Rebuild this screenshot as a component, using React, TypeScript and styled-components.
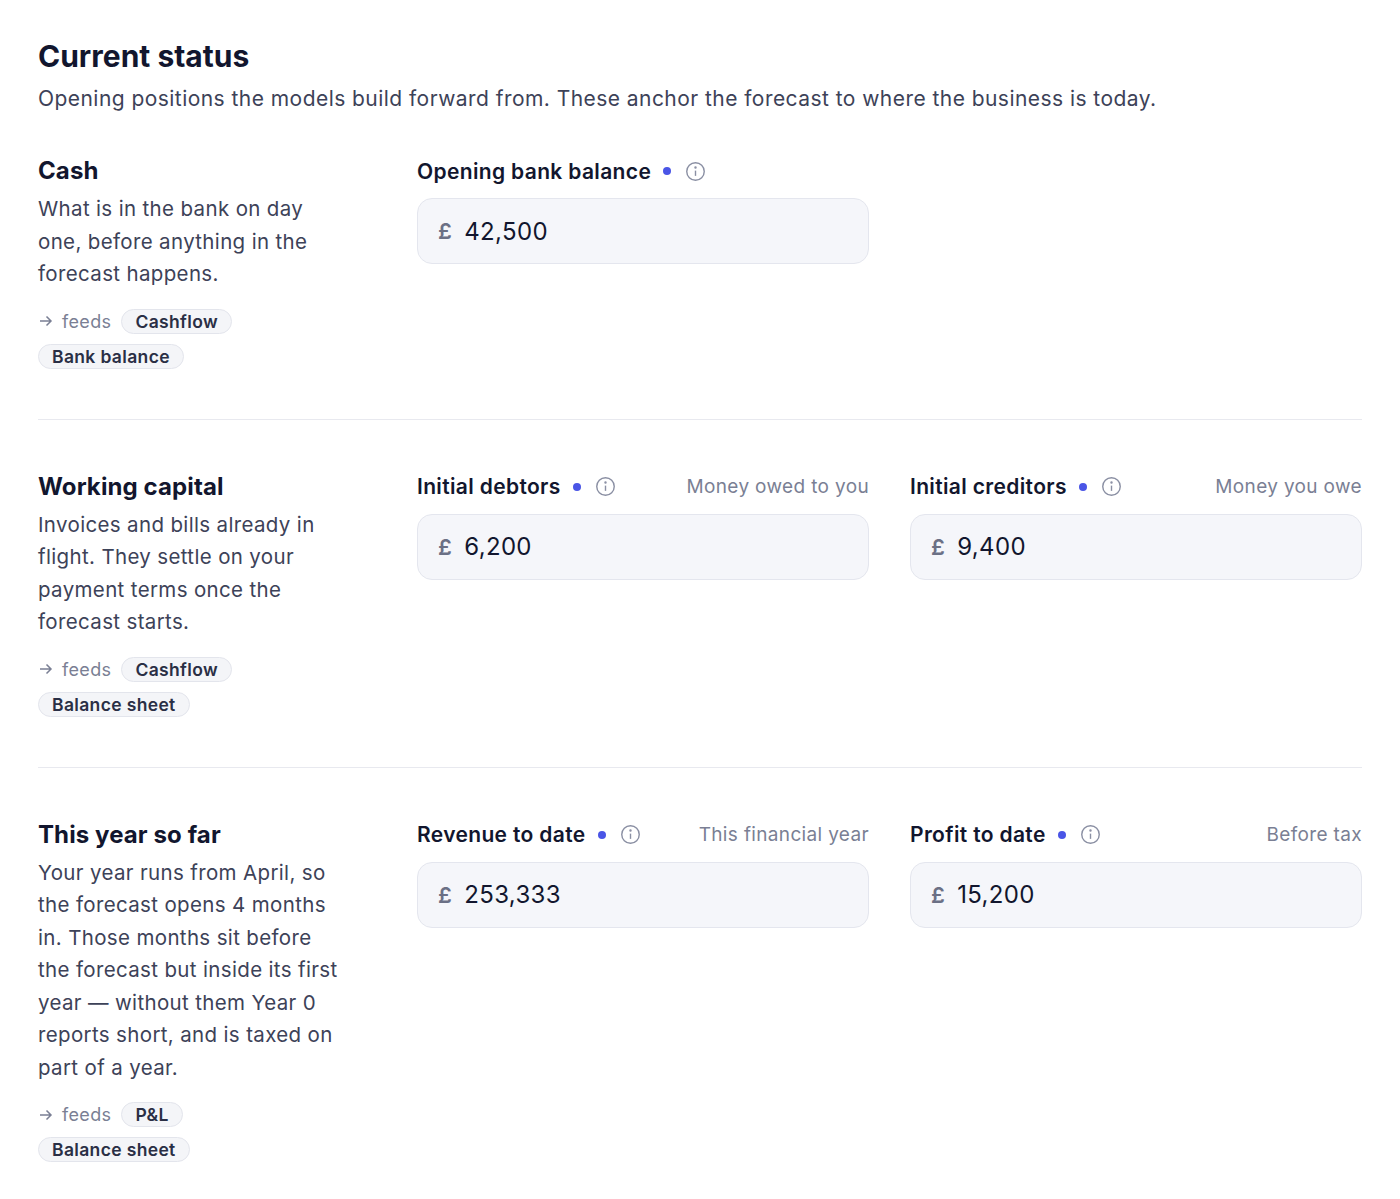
import React from "react";
import styled, { createGlobalStyle } from "styled-components";

const G = createGlobalStyle`
  body { margin: 0; background: #fff; font-family: Inter, "Noto Sans", sans-serif; color: #161b33; letter-spacing: 0.35px; }
`;
const Page = styled.div`padding: 38px 38px 20px 38px; width: 1324px;`;
const Title = styled.h1`margin: 0; font-size: 30px; font-weight: 700; letter-spacing: 0; color: #12162e;`;
const Sub = styled.p`margin: 10px 0 0; font-size: 21px; color: #3d4258; line-height: 30px; letter-spacing: 0.45px;`;
const Section = styled.section<{ last?: boolean }>`
  display: grid; grid-template-columns: 338px 452px 452px; column-gap: 41px;
  padding: ${p => (p.last ? "52px 0 0" : "52px 0 50px")};
  border-bottom: ${p => (p.last ? "none" : "1px solid #e8e9ef")};
  &:first-of-type { padding-top: 42px; }
`;
const SecTitle = styled.h2`margin: 0 0 7px; font-size: 24px; font-weight: 700; color: #12162e; line-height: 30px; letter-spacing: 0.1px;`;
const Desc = styled.p`margin: 0; font-size: 20.5px; line-height: 32.5px; color: #3d4258; max-width: 300px;`;
const Feeds = styled.div`display: flex; flex-wrap: wrap; gap: 10px 10px; margin-top: 18px; align-items: center; width: 250px;`;
const FeedLbl = styled.span`font-size: 18px; color: #7a7f94; display: flex; align-items: center; gap: 8px;`;
const Chip = styled.span`font-size: 17.5px; font-weight: 600; color: #2a2f45; background: #f4f5f8; border: 1px solid #e3e5ec; border-radius: 14px; padding: 1px 13px;`;
const Field = styled.div`display: flex; flex-direction: column;`;
const LabelRow = styled.div`display: flex; align-items: center; height: 30px; margin-bottom: 12px;`;
const Label = styled.span`font-size: 21px; font-weight: 600; color: #12162e;`;
const Dot = styled.span`width: 8px; height: 8px; border-radius: 50%; background: #4a55e6; margin-left: 12px;`;
const Hint = styled.span`margin-left: auto; font-size: 19px; color: #7a7f94;`;
const Input = styled.div`height: 64px; border: 1px solid #e4e6ee; background: #f5f6fa; border-radius: 15px; display: flex; align-items: center; padding: 0 20px; font-size: 24px; color: #12162e;`;
const Pound = styled.span`color: #6b7085; font-weight: 600; margin-right: 12px; font-size: 22px;`;

const Info = () => (
  <svg width="21" height="21" viewBox="0 0 24 24" fill="none" stroke="#8a8fa3" strokeWidth="1.6" style={{ marginLeft: 14 }}>
    <circle cx="12" cy="12" r="10" /><line x1="12" y1="11" x2="12" y2="17" /><circle cx="12" cy="7.5" r="0.6" fill="#8a8fa3" />
  </svg>
);
const Arrow = () => (
  <svg width="16" height="14" viewBox="0 0 16 14" fill="none" stroke="#7a7f94" strokeWidth="1.5"><path d="M2 7h11M8.5 2.5 13 7l-4.5 4.5" /></svg>
);

const F = ({ label, hint, value }: { label: string; hint?: string; value: string }) => (
  <Field>
    <LabelRow><Label>{label}</Label><Dot /><Info />{hint && <Hint>{hint}</Hint>}</LabelRow>
    <Input><Pound>£</Pound>{value}</Input>
  </Field>
);

const Left = ({ t, d, chips }: { t: string; d: string; chips: string[] }) => (
  <div>
    <SecTitle>{t}</SecTitle>
    <Desc>{d}</Desc>
    <Feeds><FeedLbl><Arrow />feeds</FeedLbl>{chips.map(c => <Chip key={c}>{c}</Chip>)}</Feeds>
  </div>
);

export default function App() {
  return (
    <Page>
      <G />
      <Title>Current status</Title>
      <Sub>Opening positions the models build forward from. These anchor the forecast to where the business is today.</Sub>
      <Section>
        <Left t="Cash" d="What is in the bank on day one, before anything in the forecast happens." chips={["Cashflow", "Bank balance"]} />
        <F label="Opening bank balance" value="42,500" />
      </Section>
      <Section>
        <Left t="Working capital" d="Invoices and bills already in flight. They settle on your payment terms once the forecast starts." chips={["Cashflow", "Balance sheet"]} />
        <F label="Initial debtors" hint="Money owed to you" value="6,200" />
        <F label="Initial creditors" hint="Money you owe" value="9,400" />
      </Section>
      <Section last>
        <Left t="This year so far" d="Your year runs from April, so the forecast opens 4 months in. Those months sit before the forecast but inside its first year — without them Year 0 reports short, and is taxed on part of a year." chips={["P&L", "Balance sheet"]} />
        <F label="Revenue to date" hint="This financial year" value="253,333" />
        <F label="Profit to date" hint="Before tax" value="15,200" />
      </Section>
    </Page>
  );
}
